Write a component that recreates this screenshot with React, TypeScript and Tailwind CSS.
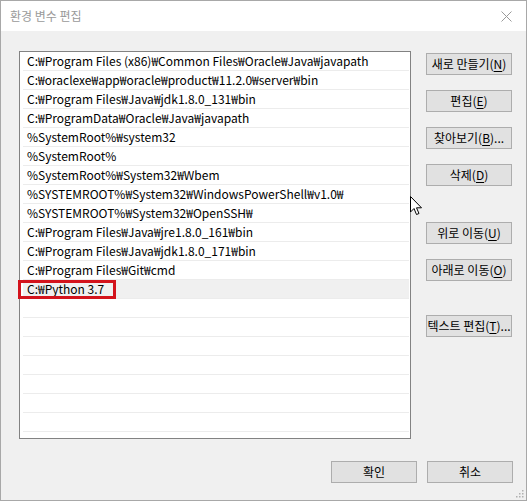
import React from "react";

const FONT = '"Noto Sans CJK KR", "Noto Sans", sans-serif';

const rows = [
  "C:₩Program Files (x86)₩Common Files₩Oracle₩Java₩javapath",
  "C:₩oraclexe₩app₩oracle₩product₩11.2.0₩server₩bin",
  "C:₩Program Files₩Java₩jdk1.8.0_131₩bin",
  "C:₩ProgramData₩Oracle₩Java₩javapath",
  "%SystemRoot%₩system32",
  "%SystemRoot%",
  "%SystemRoot%₩System32₩Wbem",
  "%SYSTEMROOT%₩System32₩WindowsPowerShell₩v1.0₩",
  "%SYSTEMROOT%₩System32₩OpenSSH₩",
  "C:₩Program Files₩Java₩jre1.8.0_161₩bin",
  "C:₩Program Files₩Java₩jdk1.8.0_171₩bin",
  "C:₩Program Files₩Git₩cmd",
  "C:₩Python 3.7",
  "",
  "",
  "",
  "",
  "",
  "",
  "",
  "",
];

function Btn({
  label,
  mn,
  suffix = "",
  className = "",
}: {
  label: string;
  mn?: string;
  suffix?: string;
  className?: string;
}) {
  return (
    <div
      className={
        "flex h-[22px] w-[86px] items-center justify-center border border-[#adadad] bg-[#e1e1e1] text-[12px] leading-none text-black " +
        className
      }
    >
      <span>
        {label}
        {mn ? (
          <>
            (<span className="underline underline-offset-2">{mn}</span>)
          </>
        ) : null}
        {suffix}
      </span>
    </div>
  );
}

export default function App() {
  return (
    <div
      className="relative flex h-[501px] w-[527px] flex-col border border-[#a8a8a8] bg-[#f0f0f0]"
      style={{ fontFamily: FONT }}
    >
      {/* title bar */}
      <div className="flex h-[30px] items-center justify-between bg-white pl-[9px] pr-[14px]">
        <span className="text-[12px] text-[#9a9a9a]">환경 변수 편집</span>
        <svg width="11" height="11" viewBox="0 0 11 11">
          <path d="M0.5 0.5 L10.5 10.5 M10.5 0.5 L0.5 10.5" stroke="#9a9a9a" strokeWidth="1" />
        </svg>
      </div>

      {/* body */}
      <div className="flex flex-1 flex-col pl-[18px] pr-[13px] pt-[20px]">
        <div className="flex gap-[15px]">
          {/* list */}
          <div className="relative h-[388px] w-[392px] border border-[#828282] bg-white">
            <div className="h-full overflow-hidden">
              {rows.map((r, i) => (
                <div
                  key={i}
                  className={
                    "ml-[3px] mr-[1px] flex h-[19px] items-center border-b border-[#ececec] pl-[4px] text-[12px] leading-none text-black " +
                    (i === 12 ? "bg-[#f0f0f0]" : "")
                  }
                >
                  <span className="whitespace-nowrap">{r}</span>
                </div>
              ))}
            </div>
            <div className="absolute left-[-2px] top-[228px] h-[19px] w-[98px] border-[3px] border-[#d3131c]" />
          </div>

          {/* buttons */}
          <div className="flex flex-col pt-[2px]">
            <Btn label="새로 만들기" mn="N" />
            <Btn label="편집" mn="E" className="mt-[15px]" />
            <Btn label="찾아보기" mn="B" suffix="..." className="mt-[15px]" />
            <Btn label="삭제" mn="D" className="mt-[15px]" />
            <Btn label="위로 이동" mn="U" className="mt-[36px]" />
            <Btn label="아래로 이동" mn="O" className="mt-[15px]" />
            <Btn label="텍스트 편집" mn="T" suffix="..." className="mt-[34px]" />
          </div>
        </div>

        <div className="mt-[22px] flex justify-end gap-[10px]">
          <Btn label="확인" className="w-[85px]" />
          <Btn label="취소" />
        </div>
      </div>

      {/* mouse cursor */}
      <svg
        className="absolute left-[409px] top-[195px]"
        width="13"
        height="20"
        viewBox="0 0 13 20"
      >
        <path
          d="M0.5 0.5 L0.5 16 L4 12.5 L6.5 18.5 L9 17.5 L6.5 11.8 L11.5 11.8 Z"
          fill="white"
          stroke="black"
          strokeWidth="1"
          strokeLinejoin="round"
        />
      </svg>

      {/* resize grip */}
      <svg className="absolute bottom-[2px] right-[2px]" width="9" height="9" viewBox="0 0 9 9">
        <rect x="7" y="1" width="1.5" height="1.5" fill="#b0b0b0" />
        <rect x="4" y="4" width="1.5" height="1.5" fill="#b0b0b0" />
        <rect x="7" y="4" width="1.5" height="1.5" fill="#b0b0b0" />
        <rect x="1" y="7" width="1.5" height="1.5" fill="#b0b0b0" />
        <rect x="4" y="7" width="1.5" height="1.5" fill="#b0b0b0" />
        <rect x="7" y="7" width="1.5" height="1.5" fill="#b0b0b0" />
      </svg>
    </div>
  );
}
